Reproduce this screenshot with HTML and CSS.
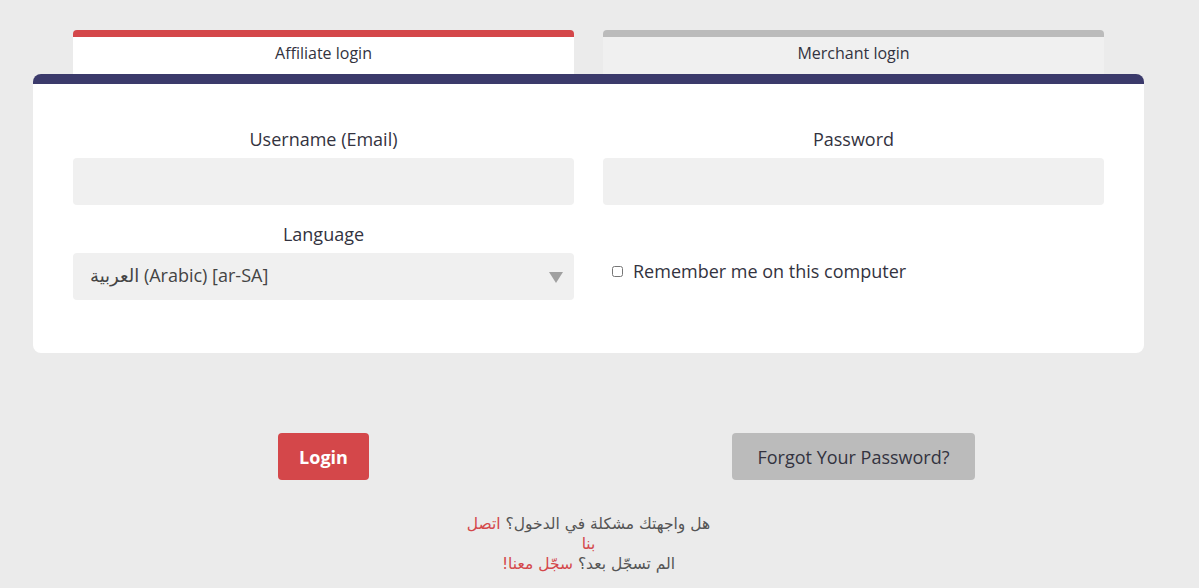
FILE: index.html
```html
<!DOCTYPE html>
<html lang="en">
<head>
<meta charset="utf-8">
<title>Login</title>
<link rel="stylesheet" href="styles.css">
</head>
<body>
<div class="page">
  <div class="tabs">
    <div class="tab tab-active">Affiliate login</div>
    <div class="tab tab-inactive">Merchant login</div>
  </div>
  <div class="card">
    <div class="grid">
      <div class="field">
        <label class="label">Username (Email)</label>
        <input class="input" type="text">
      </div>
      <div class="field">
        <label class="label">Password</label>
        <input class="input" type="password">
      </div>
      <div class="field">
        <label class="label">Language</label>
        <div class="select-wrap">
          <div class="select">العربية (Arabic) [ar-SA]</div>
        </div>
      </div>
      <div class="field remember-field">
        <label class="remember"><input type="checkbox" class="check"> Remember me on this computer</label>
      </div>
    </div>
  </div>
  <div class="actions">
    <div class="action-cell"><button class="btn btn-login">Login</button></div>
    <div class="action-cell"><button class="btn btn-forgot">Forgot Your Password?</button></div>
  </div>
  <div class="help" dir="rtl">
    <p class="help-line"><span class="help-text">هل واجهتك مشكلة في الدخول؟</span> <a class="link">اتصل</a><br><a class="link">بنا</a></p>
    <p class="help-line"><span class="help-text">الم تسجّل بعد؟</span> <a class="link">سجّل معنا!</a></p>
  </div>
</div>
</body>
</html>
```

FILE: styles.css
```css
* { box-sizing: border-box; }
html, body { margin: 0; padding: 0; }
body {
  background: #ebebeb;
  font-family: "Open Sans", "DejaVu Sans", sans-serif;
  color: #333340;
}
.page {
  width: 1111px;
  margin-left: 33px;
  padding-top: 30px;
}
.tabs {
  display: grid;
  grid-template-columns: 1fr 1fr;
  column-gap: 29px;
  padding: 0 40px;
}
.tab {
  height: 44px;
  border-top: 7px solid #d4474a;
  border-radius: 4px 4px 0 0;
  background: #ffffff;
  text-align: center;
  font-size: 16px;
  line-height: 33px;
  color: #333340;
}
.tab-inactive {
  border-top-color: #bbbbbb;
  background: #f0f0f0;
}
.card {
  background: #ffffff;
  border-top: 10px solid #3b3a6b;
  border-radius: 8px;
  padding: 42px 40px 53px;
}
.grid {
  display: grid;
  grid-template-columns: 1fr 1fr;
  column-gap: 29px;
  row-gap: 16px;
}
.field {
  display: flex;
  flex-direction: column;
}
.label {
  text-align: center;
  font-size: 18px;
  line-height: 26px;
  height: 26px;
  margin-bottom: 6px;
  color: #333340;
}
.input {
  height: 47px;
  border: none;
  border-radius: 4px;
  background: #f0f0f0;
  font: inherit;
  outline: none;
}
.select-wrap {
  position: relative;
}
.select {
  height: 47px;
  border-radius: 4px;
  background: #f0f0f0;
  padding-left: 17px;
  font-size: 18px;
  line-height: 45px;
  color: #444444;
}
.select-wrap::after {
  content: "";
  position: absolute;
  right: 11px;
  top: 19px;
  border-left: 7px solid transparent;
  border-right: 7px solid transparent;
  border-top: 11px solid #a0a0a0;
}
.remember-field {
  justify-content: flex-end;
}
.remember {
  height: 47px;
  display: flex;
  align-items: center;
  padding-left: 9px;
  font-size: 18px;
  color: #333340;
  margin-bottom: 6px;
}
.check {
  width: 11px;
  height: 11px;
  margin: 2px 10px 0 0;
}
.actions {
  display: grid;
  grid-template-columns: 1fr 1fr;
  column-gap: 29px;
  padding: 80px 40px 0;
}
.action-cell {
  display: flex;
  justify-content: center;
}
.btn {
  height: 47px;
  border: none;
  border-radius: 4px;
  font-family: "Open Sans", sans-serif;
  font-size: 18px;
}
.btn-login {
  background: #d4474a;
  color: #ffffff;
  font-weight: 700;
  width: 91px;
  padding: 0;
}
.btn-forgot {
  background: #bbbbbb;
  color: #333340;
  width: 243px;
  padding: 0;
}
.help {
  width: 300px;
  margin: 34px auto 0;
  text-align: center;
  font-family: "DejaVu Sans", sans-serif;
  font-size: 15.5px;
  color: #555555;
}
.help-line {
  margin: 0;
  line-height: 20px;
}
.link {
  color: #d4474a;
}
```
